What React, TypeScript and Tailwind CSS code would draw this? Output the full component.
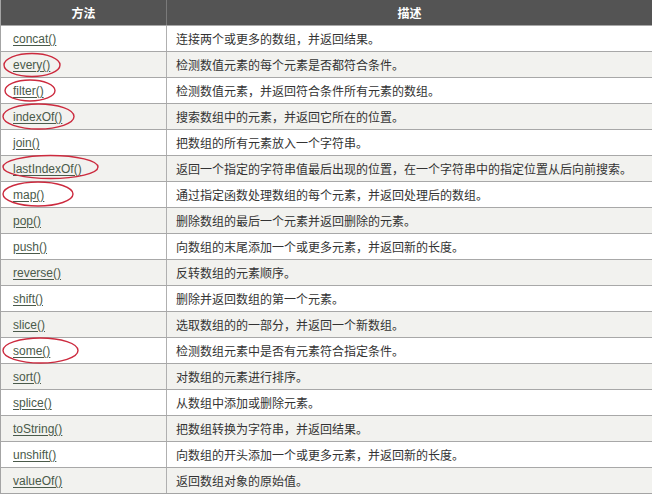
import React from 'react';

const methods: [string, string][] = [
  ['concat()', '连接两个或更多的数组，并返回结果。'],
  ['every()', '检测数值元素的每个元素是否都符合条件。'],
  ['filter()', '检测数值元素，并返回符合条件所有元素的数组。'],
  ['indexOf()', '搜索数组中的元素，并返回它所在的位置。'],
  ['join()', '把数组的所有元素放入一个字符串。'],
  ['lastIndexOf()', '返回一个指定的字符串值最后出现的位置，在一个字符串中的指定位置从后向前搜索。'],
  ['map()', '通过指定函数处理数组的每个元素，并返回处理后的数组。'],
  ['pop()', '删除数组的最后一个元素并返回删除的元素。'],
  ['push()', '向数组的末尾添加一个或更多元素，并返回新的长度。'],
  ['reverse()', '反转数组的元素顺序。'],
  ['shift()', '删除并返回数组的第一个元素。'],
  ['slice()', '选取数组的的一部分，并返回一个新数组。'],
  ['some()', '检测数组元素中是否有元素符合指定条件。'],
  ['sort()', '对数组的元素进行排序。'],
  ['splice()', '从数组中添加或删除元素。'],
  ['toString()', '把数组转换为字符串，并返回结果。'],
  ['unshift()', '向数组的开头添加一个或更多元素，并返回新的长度。'],
  ['valueOf()', '返回数组对象的原始值。'],
];

// red hand-drawn circles marking some methods
const marks = [
  { cx: 32, cy: 65, rx: 28, ry: 11.5 },
  { cx: 30, cy: 90.5, rx: 25, ry: 10.5 },
  { cx: 38.5, cy: 116.5, rx: 35.5, ry: 12.5 },
  { cx: 50.5, cy: 167, rx: 47.5, ry: 11.5 },
  { cx: 38, cy: 194, rx: 35, ry: 12 },
  { cx: 40.5, cy: 350.5, rx: 37.5, ry: 12.5 },
];

export default function App() {
  return (
    <div className="w-[652px] h-[494px] bg-white overflow-hidden">
      <div className="relative w-[652px] border-l border-b border-[#a4a4a4]">
        <div className="flex h-[25px] bg-[#545454] text-white text-[12px] font-bold font-['Noto_Sans_CJK_SC',sans-serif]">
          <div className="w-[166px] border-r border-[#7a7a7a] flex items-center justify-center">方法</div>
          <div className="flex-1 flex items-center justify-center">描述</div>
        </div>
        {methods.map(([name, desc], i) => (
          <div
            key={name}
            className={`flex h-[26px] border-t border-[#a8a8a8] ${i % 2 === 0 ? 'bg-white' : 'bg-[#f2f2ef]'}`}
          >
            <div className="w-[166px] border-r border-[#b0b0b0] flex items-center pl-[12px]">
              <span className="text-[12px] text-[#4a5a4a] underline underline-offset-2 font-['Liberation_Sans',Arial,sans-serif]">
                {name}
              </span>
            </div>
            <div className="flex-1 flex items-center pl-[9px] text-[12px] text-[#333] font-['Noto_Sans_CJK_SC',sans-serif] whitespace-nowrap">
              {desc}
            </div>
          </div>
        ))}
        <svg className="absolute left-[-1px] top-0 pointer-events-none" width="652" height="494">
          {marks.map((m, i) => (
            <ellipse key={i} cx={m.cx} cy={m.cy} rx={m.rx} ry={m.ry} fill="none" stroke="#cc2a3e" strokeWidth="1.4" />
          ))}
        </svg>
      </div>
    </div>
  );
}
